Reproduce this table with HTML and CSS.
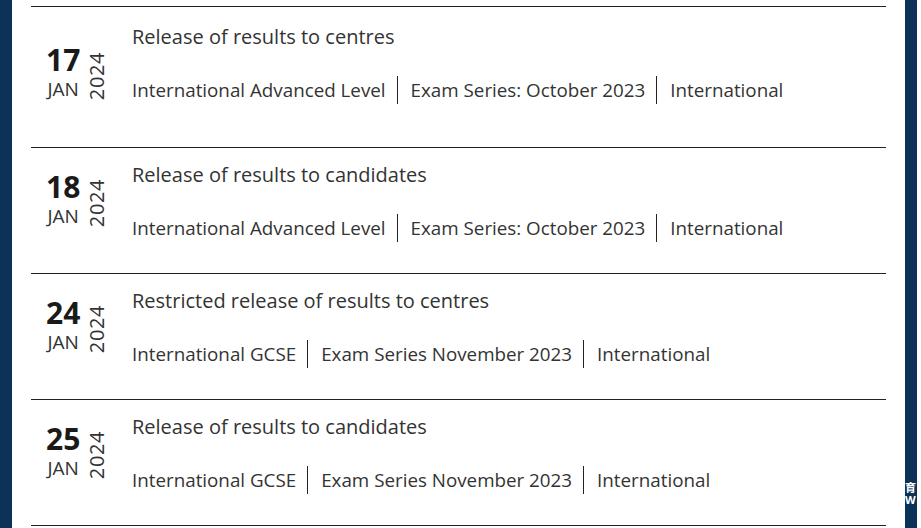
FILE: index.html
```html
<!DOCTYPE html>
<html lang="en">
<head>
<meta charset="utf-8">
<title>Key dates</title>
<link rel="stylesheet" href="styles.css">
</head>
<body>
<div class="frame">
  <main class="content">
    <ul class="dates">
      <li class="row row--first">
        <div class="date date--first">
          <div class="dm"><span class="day">17</span><span class="month">JAN</span></div>
          <span class="year">2024</span>
        </div>
        <div class="info">
          <p class="title">Release of results to centres</p>
          <p class="meta"><span>International Advanced Level</span><span>Exam Series: October 2023</span><span>International</span></p>
        </div>
      </li>
      <li class="row">
        <div class="date">
          <div class="dm"><span class="day">18</span><span class="month">JAN</span></div>
          <span class="year">2024</span>
        </div>
        <div class="info">
          <p class="title">Release of results to candidates</p>
          <p class="meta"><span>International Advanced Level</span><span>Exam Series: October 2023</span><span>International</span></p>
        </div>
      </li>
      <li class="row">
        <div class="date">
          <div class="dm"><span class="day">24</span><span class="month">JAN</span></div>
          <span class="year">2024</span>
        </div>
        <div class="info">
          <p class="title">Restricted release of results to centres</p>
          <p class="meta"><span>International GCSE</span><span>Exam Series November 2023</span><span>International</span></p>
        </div>
      </li>
      <li class="row">
        <div class="date">
          <div class="dm"><span class="day">25</span><span class="month">JAN</span></div>
          <span class="year">2024</span>
        </div>
        <div class="info">
          <p class="title">Release of results to candidates</p>
          <p class="meta"><span>International GCSE</span><span>Exam Series November 2023</span><span>International</span></p>
        </div>
      </li>
      <li class="row row--last"></li>
    </ul>
  </main>
  <div class="widget"><span>育</span><span class="w">W</span></div>
</div>
</body>
</html>
```

FILE: styles.css
```css
html, body {
  margin: 0;
  padding: 0;
  background: #ffffff;
}
body {
  font-family: "Open Sans", "Noto Sans CJK SC", sans-serif;
  color: #333333;
  overflow: hidden;
}
.frame {
  position: relative;
  height: 528px;
  margin-right: 4px;
  background: #0c3259;
  padding: 0 12px;
  display: flex;
}
.content {
  flex: 1;
  background: #ffffff;
  padding: 6px 19px 0;
}
.dates {
  list-style: none;
  margin: 0;
  padding: 0;
}
.row {
  display: flex;
  border-top: 1px solid #222222;
  padding: 13px 0 31px;
}
.row--first {
  padding: 16px 0 43px;
}
.row--last {
  padding: 0;
}
.date {
  width: 101px;
  flex: none;
  display: flex;
  align-items: flex-start;
  padding-left: 15px;
  box-sizing: border-box;
  margin-top: 11px;
}
.date--first {
  margin-top: 22px;
}
.dm {
  display: flex;
  flex-direction: column;
  align-items: center;
}
.day {
  font-size: 30px;
  line-height: 30px;
  font-weight: 700;
  color: #1a1a1a;
}
.month {
  font-size: 19px;
  line-height: 20px;
  margin-top: 4px;
  color: #333333;
}
.year {
  writing-mode: vertical-rl;
  transform: rotate(180deg);
  font-size: 20px;
  line-height: 20px;
  letter-spacing: 0.6px;
  margin-left: 7px;
  margin-top: 7px;
  color: #333333;
}
.info {
  display: flex;
  flex-direction: column;
  gap: 25px;
}
.title {
  margin: 0;
  font-size: 20px;
  line-height: 28px;
  color: #333333;
}
.meta {
  margin: 0;
  display: flex;
  font-size: 18.8px;
  line-height: 28px;
  color: #333333;
}
.meta span + span {
  border-left: 1px solid #222222;
  margin-left: 11px;
  padding-left: 13px;
}
.widget {
  position: absolute;
  left: 905px;
  top: 482px;
  width: 12px;
  overflow: hidden;
  display: flex;
  flex-direction: column;
  color: #ffffff;
  font-size: 11px;
  line-height: 12px;
  font-weight: 700;
}
```
